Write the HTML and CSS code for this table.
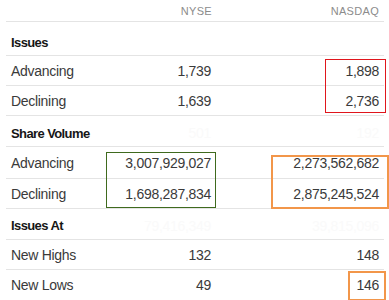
FILE: index.html
```html
<!DOCTYPE html>
<html lang="en">
<head>
  <meta charset="UTF-8">
  <title>Market Diary</title>
  <link rel="stylesheet" href="styles.css">
</head>
<body>
  <div class="diary">
    <div class="row head">
      <span></span>
      <span>NYSE</span>
      <span>NASDAQ</span>
    </div>
    <div class="row section first">
      <span>Issues</span>
      <span></span>
      <span></span>
    </div>
    <div class="row">
      <span>Advancing</span>
      <span>1,739</span>
      <span>1,898</span>
    </div>
    <div class="row">
      <span>Declining</span>
      <span>1,639</span>
      <span>2,736</span>
    </div>
    <div class="row section tall">
      <span>Share Volume</span>
      <span class="ghost">501</span>
      <span class="ghost">192</span>
    </div>
    <div class="row tall">
      <span>Advancing</span>
      <span>3,007,929,027</span>
      <span>2,273,562,682</span>
    </div>
    <div class="row">
      <span>Declining</span>
      <span>1,698,287,834</span>
      <span>2,875,245,524</span>
    </div>
    <div class="row section last-section">
      <span>Issues At</span>
      <span class="ghost">79,416,349</span>
      <span class="ghost">39,815,096</span>
    </div>
    <div class="row">
      <span>New Highs</span>
      <span>132</span>
      <span>148</span>
    </div>
    <div class="row last">
      <span>New Lows</span>
      <span>49</span>
      <span>146</span>
    </div>
    <div class="mark red"></div>
    <div class="mark green"></div>
    <div class="mark orange big"></div>
    <div class="mark orange small"></div>
  </div>
</body>
</html>
```

FILE: styles.css
```css
body {
  margin: 0;
  background: #fff;
  font-family: 'Liberation Sans', Arial, sans-serif;
  color: #3a3a3a;
  overflow: hidden;
}
.diary {
  position: relative;
  width: 378px;
  height: 300px;
  margin-left: 6px;
}
.row {
  display: grid;
  grid-template-columns: 95px 105px 168px;
  align-items: center;
  box-sizing: border-box;
  height: 30px;
  padding: 0 5px;
  border-bottom: 1px solid #e4e4e4;
  font-size: 14px;
  letter-spacing: -0.3px;
  white-space: nowrap;
}
.row span {
  text-align: right;
}
.row span:first-child {
  text-align: left;
}
.row.tall {
  height: 32px;
}
.row.last {
  border-bottom: none;
}
.row.head {
  height: 22px;
  font-size: 11px;
  letter-spacing: 0.3px;
  color: #8c8c8c;
  padding-top: 1px;
}
.row.head span:nth-child(2) {
  margin-right: -1px;
}
.row.section {
  padding-top: 4px;
}
.row.section span:first-child {
  font-size: 13px;
  font-weight: bold;
  letter-spacing: -0.6px;
  color: #161616;
}
.row.section.first {
  height: 34px;
  padding-top: 7px;
}
.row.section.tall {
  height: 31px;
}
.row.last-section {
  height: 31px;
  padding-top: 3px;
}
.ghost {
  color: #fafafa;
}
.mark {
  position: absolute;
  box-sizing: border-box;
}
.mark.red {
  left: 319px;
  top: 59px;
  width: 61px;
  height: 54px;
  border: 1px solid #e0161c;
}
.mark.green {
  left: 100px;
  top: 152px;
  width: 110px;
  height: 56px;
  border: 1px solid #3f6a1e;
}
.mark.orange {
  border: 2px solid #f2964a;
}
.mark.big {
  left: 265px;
  top: 155px;
  width: 118px;
  height: 54px;
}
.mark.small {
  left: 342px;
  top: 271px;
  width: 38px;
  height: 30px;
}
```
